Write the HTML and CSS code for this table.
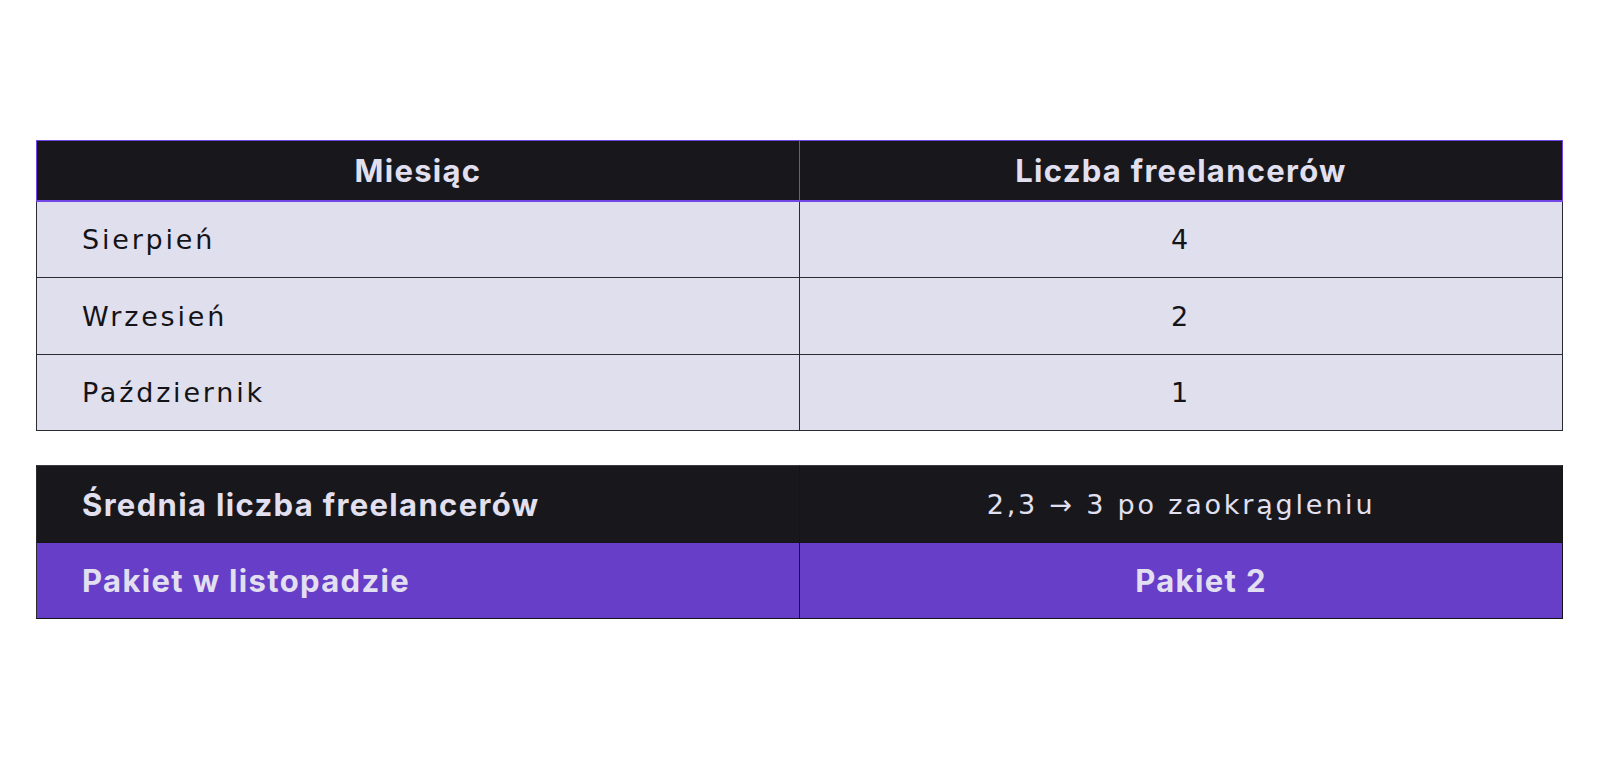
FILE: index.html
```html
<!DOCTYPE html>
<html lang="pl">
<head>
<meta charset="utf-8">
<title>Pakiet w listopadzie</title>
<link rel="stylesheet" href="styles.css">
</head>
<body>
<main class="page">
  <div class="grid months">
    <div class="cell head first">Miesiąc</div>
    <div class="cell head">Liczba freelancerów</div>

    <div class="cell row r1 first left">Sierpień</div>
    <div class="cell row r1">4</div>

    <div class="cell row r2 first left">Wrzesień</div>
    <div class="cell row r2">2</div>

    <div class="cell row r3 first left">Październik</div>
    <div class="cell row r3">1</div>
  </div>

  <div class="grid summary">
    <div class="cell dark s1 first left bold">Średnia liczba freelancerów</div>
    <div class="cell dark s1">2,3 → 3 po zaokrągleniu</div>

    <div class="cell purple s2 first left bold">Pakiet w listopadzie</div>
    <div class="cell purple s2 bold shift">Pakiet 2</div>
  </div>
</main>
</body>
</html>
```
FILE: styles.css
```css
* { box-sizing: border-box; }

html, body {
  margin: 0;
  background: #ffffff;
}

body {
  font-family: "Inter", "DejaVu Sans", sans-serif;
  color: #16161a;
}

.page {
  padding: 140px 37px 0 36px;
  display: flex;
  flex-direction: column;
  gap: 34px;
}

.grid {
  display: grid;
  grid-template-columns: 764px 763px;
}

.cell {
  display: flex;
  align-items: center;
  justify-content: center;
  border-right: 1px solid #2a2a30;
  border-bottom: 1px solid #2a2a30;
  font-family: "DejaVu Sans", "Inter", sans-serif;
  font-size: 27px;
  font-weight: 400;
  letter-spacing: 2.8px;
  white-space: nowrap;
}

.cell.first { border-left: 1px solid #2a2a30; }

.cell.left {
  justify-content: flex-start;
  padding-left: 45px;
}

.head {
  height: 62px;
  background: #18181c;
  color: #e2e0f0;
  font-family: "Inter", "DejaVu Sans", sans-serif;
  font-size: 31px;
  font-weight: 700;
  letter-spacing: 1.3px;
  border-top: 1px solid #7347e6;
  border-right-color: #7347e6;
  border-bottom: 2px solid #7347e6;
}

.head.first { border-left-color: #7347e6; }

.row {
  background: #e0dfee;
  color: #141418;
}

.r1, .r3 { height: 76px; }
.r2 { height: 77px; }

.dark {
  background: #18181c;
  color: #e2e0f0;
  border-color: #141416;
}

.s1 {
  height: 78px;
  border-top: 1px solid #3a3a40;
}

.purple {
  background: #673ec8;
  color: #e2e0f0;
  border-color: #141416;
}

.s2 { height: 76px; }

.bold {
  font-family: "Inter", "DejaVu Sans", sans-serif;
  font-size: 31px;
  font-weight: 700;
  letter-spacing: 1.35px;
}

.shift { padding-left: 40px; }
```
